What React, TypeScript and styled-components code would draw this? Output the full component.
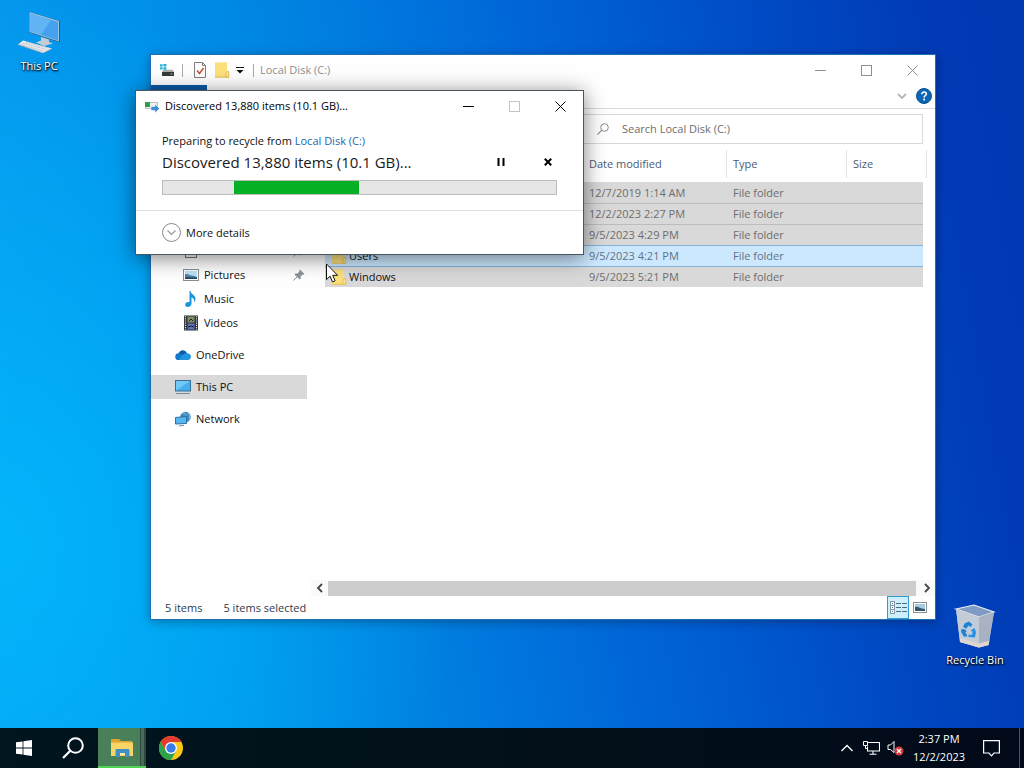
import styled, { createGlobalStyle } from "styled-components";

const GlobalStyle = createGlobalStyle`
    * {
        box-sizing: border-box;
    }
    body {
        margin: 0;
        font-family: "Open Sans", "Noto Sans", sans-serif;
        font-size: 11px;
        line-height: 16px;
        color: #111;
    }
    button, input {
        font: inherit;
        color: inherit;
        border: none;
        padding: 0;
        background: none;
    }
    svg {
        display: block;
        flex: none;
    }
`;

const Screen = styled.div`
    display: flex;
    flex-direction: column;
    min-height: 100vh;
`;

const Desktop = styled.main`
    position: relative;
    flex: 1;
    min-height: 480px;
    overflow: hidden;
    background:
        radial-gradient(ellipse 45% 75% at 0% 75%, rgba(0, 190, 255, 0.75), rgba(0, 190, 255, 0) 100%),
        linear-gradient(80deg, #0a9cf0 0%, #0092ea 22%, #0080e0 38%, #0066d8 56%, #004ec8 74%, #003ab4 92%, #0038b2 100%);
`;

const DesktopIcon = styled.button<{ $place: string }>`
    position: absolute;
    ${({ $place }) => $place}
    width: 76px;
    display: flex;
    flex-direction: column;
    align-items: center;
    gap: 4px;
    color: #fff;
    text-shadow: 1px 1px 2px #000, 0 1px 2px #000;
`;

const Explorer = styled.section`
    position: absolute;
    top: 54px;
    left: 150px;
    right: 88px;
    bottom: 108px;
    display: flex;
    flex-direction: column;
    background: #fff;
    border: 1px solid #1c6fb4;
    box-shadow: 0 2px 10px rgba(0, 0, 0, 0.3);
`;

const TitleBar = styled.header<{ $active?: boolean }>`
    display: flex;
    align-items: center;
    height: 30px;
    padding-left: ${({ $active }) => $active ? 8 : 9}px;
    color: ${({ $active }) => $active ? '#000' : '#8f8f8f'};
    h2 {
        flex: 1;
        margin: 0 0 0 ${({ $active }) => $active ? 5 : 0}px;
        font-size: 11px;
        font-weight: 400;
        white-space: nowrap;
    }
`;

const TitleDivider = styled.span`
    width: 1px;
    height: 13px;
    margin: 0 6px;
    background: #aaa;
`;

const QuickButton = styled.button<{ $narrow?: boolean }>`
    display: flex;
    justify-content: center;
    width: ${({ $narrow }) => $narrow ? 14 : 22}px;
`;

const CaptionButton = styled.button`
    display: flex;
    align-items: center;
    justify-content: center;
    width: 46px;
    height: 29px;
`;

const Ribbon = styled.div`
    display: flex;
    align-items: center;
    justify-content: flex-end;
    gap: 7px;
    height: 24px;
    padding: 0 3px 2px 0;
    border-bottom: 1px solid #dadada;
`;

const FileTab = styled.button`
    align-self: stretch;
    width: 56px;
    margin-right: auto;
    background: #0c5ba6;
`;

const AddressRow = styled.div`
    display: flex;
    gap: 8px;
    padding: 5px 12px 0 60px;
`;

const PathBox = styled.input`
    flex: 1;
    min-width: 0;
    height: 30px;
    padding: 0 8px;
    border: 1px solid #d9d9d9;
`;

const SearchBox = styled.label`
    display: flex;
    align-items: center;
    gap: 13px;
    width: 343px;
    height: 30px;
    padding-left: 16px;
    border: 1px solid #d9d9d9;
    input {
        flex: 1;
        min-width: 0;
        outline: none;
    }
    input::placeholder {
        color: #6d6d6d;
        opacity: 1;
    }
`;

const Panes = styled.div`
    display: flex;
    flex: 1;
    min-height: 0;
`;

const Sidebar = styled.nav`
    width: 156px;
    padding-top: 95px;
    overflow: hidden;
`;

const NavGroup = styled.ul`
    margin: 0 0 8px;
    padding: 0;
    list-style: none;
`;

const NavLink = styled.a<{ $nested?: boolean, $current?: boolean }>`
    display: flex;
    align-items: center;
    gap: 5px;
    height: 24px;
    padding: 0 2px 0 ${({ $nested }) => $nested ? 32 : 24}px;
    color: #111;
    text-decoration: none;
    background: ${({ $current }) => $current ? '#d9d9d9' : 'transparent'};
    span {
        flex: 1;
    }
`;

const Content = styled.div`
    display: flex;
    flex: 1;
    flex-direction: column;
    min-width: 0;
    padding-left: 4px;
`;

const FileArea = styled.div`
    flex: 1;
    min-height: 0;
    overflow: hidden;
    padding: 6px 8px 0 14px;
`;

const FileTable = styled.table`
    width: 100%;
    table-layout: fixed;
    border-collapse: separate;
    border-spacing: 0;
    th {
        height: 28px;
        padding: 0 6px;
        border-right: 1px solid #e3e3e3;
        color: #4c5a70;
        font-weight: 400;
        text-align: left;
    }
    thead::after {
        content: "";
        display: block;
        height: 4px;
    }
`;

const Column = styled.col<{ $width?: number }>`
    width: ${({ $width }) => $width ? $width + 'px' : 'auto'};
`;

const FileRow = styled.tr<{ $focused: boolean, $line: string }>`
    height: 21px;
    color: ${({ $focused }) => $focused ? '#5f7384' : '#6d6d6d'};
    td {
        padding: 0 6px;
        border-top: 1px solid ${({ $line }) => $line};
        background: ${({ $focused }) => $focused ? '#cce8ff' : '#d9d9d9'};
    }
`;

const FileName = styled.span`
    display: flex;
    align-items: center;
    gap: 2px;
    color: #111;
`;

const ScrollBar = styled.div`
    display: flex;
    align-items: center;
    height: 16px;
    background: #fafafa;
    button {
        display: flex;
        align-items: center;
        justify-content: center;
        width: 17px;
        height: 16px;
    }
`;

const ScrollThumb = styled.div`
    flex: 1;
    height: 15px;
    margin-right: 2px;
    background: #cdcdcd;
`;

const StatusBar = styled.footer`
    display: flex;
    align-items: center;
    gap: 21px;
    height: 23px;
    padding-left: 14px;
    color: #2f3b4c;
`;

const ViewButtons = styled.div`
    display: flex;
    margin-left: auto;
    padding-right: 4px;
`;

const ViewButton = styled.button<{ $pressed?: boolean }>`
    display: flex;
    align-items: center;
    justify-content: center;
    width: 22px;
    height: 23px;
    border: 1px solid ${({ $pressed }) => $pressed ? '#2f9bd6' : 'transparent'};
    background: ${({ $pressed }) => $pressed ? '#cdeefb' : 'transparent'};
`;

const Dialog = styled.section`
    position: absolute;
    top: 90px;
    left: 135px;
    width: 449px;
    max-width: calc(100% - 135px);
    background: #fff;
    border: 1px solid #4a5560;
    box-shadow: 0 3px 20px rgba(0, 0, 0, 0.5);
`;

const DialogBody = styled.div`
    padding: 11px 26px 15px;
    border-bottom: 1px solid #dfdfdf;
`;

const Task = styled.p`
    margin: 0;
    line-height: 18px;
    a {
        color: #1a66b0;
        text-decoration: none;
    }
`;

const ProgressHead = styled.div`
    display: flex;
    align-items: center;
    gap: 29px;
    height: 24px;
    button {
        display: flex;
        align-items: center;
        justify-content: center;
        width: 18px;
        height: 18px;
    }
`;

const ProgressText = styled.p`
    flex: 1;
    margin: 0;
    font-size: 15px;
    line-height: 24px;
    color: #1a1a1a;
`;

const ProgressTrack = styled.div`
    height: 15px;
    margin-top: 6px;
    border: 1px solid #bcbcbc;
    background: #e6e6e6;
`;

const ProgressFill = styled.div`
    height: 100%;
    background: #06b025;
`;

const DetailsButton = styled.button`
    display: flex;
    align-items: center;
    gap: 5px;
    height: 43px;
    padding-left: 26px;
`;

const Pointer = styled.div`
    position: absolute;
    top: 263px;
    left: 325px;
    pointer-events: none;
`;

const Taskbar = styled.footer`
    display: flex;
    align-items: center;
    gap: 1px;
    height: 40px;
    padding-right: 3px;
    color: #fff;
    background: linear-gradient(90deg, #01151f, #021019 50%, #020a1a);
`;

const TaskButton = styled.button<{ $progress?: boolean }>`
    display: flex;
    align-items: center;
    justify-content: center;
    width: 48px;
    height: 40px;
    ${({ $progress }) => $progress && `
        padding-top: 2px;
        border-bottom: 2px solid #4fd350;
        background: linear-gradient(90deg, #4a8059 42px, #2b4a3c 42px, #2b4a3c 43px, #4a6b5c 43px, #4a6b5c 46px, #2b4a3c 46px);
    `}
`;

const Tray = styled.div`
    display: flex;
    align-items: center;
    height: 100%;
    margin-left: auto;
`;

const TrayButton = styled.button`
    display: flex;
    align-items: center;
    justify-content: center;
    width: 24px;
    height: 40px;
`;

const Clock = styled.button`
    width: 64px;
    margin-right: 8px;
    line-height: 18px;
    text-align: center;
`;

const ShowDesktop = styled.button`
    width: 2px;
    height: 40px;
    margin-left: 16px;
    border-left: 1px solid #4b5563;
`;

const Minimize = () => (
    <svg width="11" height="11" viewBox="0 0 11 11"><path d="M0 5.5h11" stroke="currentColor" /></svg>
)

const Maximize = ({ color = 'currentColor' }: { color?: string }) => (
    <svg width="11" height="11" viewBox="0 0 11 11"><rect x=".5" y=".5" width="10" height="10" fill="none" stroke={color} /></svg>
)

const Close = () => (
    <svg width="11" height="11" viewBox="0 0 11 11"><path d="M.5.5l10 10M10.5.5l-10 10" stroke="currentColor" /></svg>
)

const Chevron = ({ d, color }: { d: string, color: string }) => (
    <svg width="10" height="10" viewBox="0 0 10 10"><path d={d} fill="none" stroke={color} strokeWidth="1.8" /></svg>
)

const DriveIcon = () => (
    <svg width="16" height="16" viewBox="0 0 16 16">
        <path d="M0 2.3h2.6v2.2H0zM3.4 2h3v2.5h-3zM0 5.3h2.6v2.2H0zM3.4 5.3h3v2.5h-3z" fill="#25b2dc" />
        <path d="M3.5 7.8h9L14 10H2z" fill="#a9adb0" />
        <path d="M2 10h12v4H2z" fill="#33383c" />
        <path d="M10.5 12h2" stroke="#7fe08b" />
    </svg>
)

const CheckDocIcon = () => (
    <svg width="16" height="16" viewBox="0 0 16 16">
        <path d="M2.5.5h8l3 3v12h-11z" fill="#fdfdfd" stroke="#7d7d7d" />
        <path d="M10.5.5v3h3" fill="none" stroke="#7d7d7d" />
        <path d="M5 8.5l2.5 3L11.5 6" fill="none" stroke="#c5502f" strokeWidth="1.5" />
    </svg>
)

const FolderIcon = () => (
    <svg width="16" height="16" viewBox="0 0 16 16">
        <path d="M1 .5h12v11l2 1v3H1z" fill="#f4d667" />
        <path d="M1 1h12v14H1z" fill="#fbe07c" />
        <path d="M13 9.5h1.8v6h-3v-4z" fill="#fbe596" stroke="#dcb442" strokeWidth=".7" />
        <path d="M1 15.2h13" stroke="#e3bd4e" strokeWidth=".8" />
    </svg>
)

const DropIcon = () => (
    <svg width="8" height="8" viewBox="0 0 8 8"><path d="M0 1.5h8" stroke="#111" /><path d="M.5 4h7L4 7.6z" fill="#111" /></svg>
)

const HelpIcon = () => (
    <svg width="16" height="16" viewBox="0 0 16 16">
        <circle cx="8" cy="8" r="7.5" fill="#0b66b5" stroke="#0a4f90" />
        <path d="M5.8 6.2c0-1.4 1-2.2 2.3-2.2s2.2.8 2.2 2c0 1.7-2.2 1.7-2.2 3.4" fill="none" stroke="#fff" strokeWidth="1.6" />
        <rect x="7.2" y="10.6" width="1.8" height="1.8" fill="#fff" />
    </svg>
)

const SearchIcon = () => (
    <svg width="12" height="12" viewBox="0 0 12 12">
        <circle cx="7.5" cy="4.5" r="3.8" fill="none" stroke="#8c8c8c" />
        <path d="M4.8 7.2L.4 11.6" stroke="#8c8c8c" strokeWidth="1.2" />
    </svg>
)

const TransferIcon = () => (
    <svg width="16" height="16" viewBox="0 0 16 16">
        <rect x="1.5" y="4.5" width="12" height="6" fill="#eef1f3" stroke="#b9c0c6" />
        <rect x="1" y="4" width="5" height="5" fill="#2f9e45" />
        <path d="M7 8.5h4V6l4.5 4.5L11 15v-2.6H7z" fill="#3a8ddb" stroke="#fff" strokeWidth=".5" />
    </svg>
)

const DocumentIcon = () => (
    <svg width="16" height="16" viewBox="0 0 16 16">
        <rect x="2.5" y="1.5" width="11" height="13" fill="#fff" stroke="#777" />
        <path d="M5 5h6M5 8h6M5 11h6" stroke="#777" />
    </svg>
)

const PictureIcon = () => (
    <svg width="16" height="16" viewBox="0 0 16 16">
        <rect x=".5" y="2.5" width="15" height="11" fill="#fff" stroke="#8a8f94" />
        <rect x="2" y="4" width="12" height="8" fill="#bfe1f4" />
        <path d="M2 7.5c3-1.5 4 1 6.5 1S12 9.5 14 10v2H2z" fill="#4d81ab" />
        <path d="M2 10.500c4-1 8 .5 12 0V12H2z" fill="#23465f" />
    </svg>
)

const MusicIcon = () => (
    <svg width="16" height="16" viewBox="0 0 16 16">
        <path d="M7.5 0c.5 3.5 5 3.800 5 7.800 0 1.500-.6 2.500-1.500 3.400.6-2.800-.8-4.400-2.500-5v6.300c0 2-1.600 3.500-3.600 3.500-1.700 0-2.700-1-2.700-2.300 0-1.800 2-3 4.300-2.500V0z" fill="#1a94dc" />
    </svg>
)

const VideoIcon = () => (
    <svg width="16" height="16" viewBox="0 0 16 16">
        <rect x="1" y=".5" width="14" height="15" fill="#2d3036" />
        <path d="M2.5 1v14M13.5 1v14" stroke="#dcdcdc" strokeWidth="1.2" strokeDasharray="1.2 1" />
        <rect x="4.5" y="1.5" width="7" height="6" fill="#7d8d68" />
        <rect x="4.5" y="8.5" width="7" height="6" fill="#5b72b8" />
        <path d="M6 6l2-2 2 2M5 12l3-1 3 1" stroke="#1c2028" fill="none" />
    </svg>
)

const CloudIcon = () => (
    <svg width="16" height="16" viewBox="0 0 16 16">
        <path d="M3.5 6.500C4.500 3.300 9.500 1.500 12 6.300l-4 4.200-6 1z" fill="#0c5cae" />
        <path d="M3.600 13a3.300 3.300 0 0 1 0-6.700c1.700 0 2.600.7 4 1.700l5 4z" fill="#1279cc" />
        <path d="M3.500 13c2-2 4-6.800 8.500-6.800 2.500 0 4 1.700 4 3.500 0 1.900-1.400 3.300-3.300 3.300z" fill="#2394e0" />
    </svg>
)

const ComputerIcon = () => (
    <svg width="16" height="16" viewBox="0 0 16 16">
        <rect x=".5" y="1.500" width="15" height="10.500" fill="#45b0ee" stroke="#3a6d92" />
        <path d="M1 11.500V2h14z" fill="#72c8f6" />
        <path d="M1 14.500h14" stroke="#7d8a93" />
    </svg>
)

const NetworkIcon = () => (
    <svg width="16" height="16" viewBox="0 0 16 16">
        <circle cx="10.500" cy="6" r="5.300" fill="#3f88bd" />
        <path d="M7 2.500c2-1 4 0 4 2M12.500 1.500c2 2 3 5 1.500 8" fill="none" stroke="#8fc9e8" />
        <path d="M.5 6.500l11-1v7l-11 .5z" fill="#55b8f0" stroke="#2b6f9e" />
        <path d="M4 14.800l5-.3" stroke="#7d8a93" />
    </svg>
)

const PinIcon = () => (
    <svg width="12" height="12" viewBox="0 0 12 12">
        <path d="M7 .5L11.5 5l-1 .8-.9-.2-2 2 .1 2.200-1 .8-5.200-5.200.8-1 2.200.1 2-2-.3-1z" fill="#8b949b" />
        <path d="M4 8L.5 11.5" stroke="#8b949b" />
    </svg>
)

const DetailsViewIcon = () => (
    <svg width="17" height="13" viewBox="0 0 17 13">
        {[0, 4, 8].map((y) =>
            <g key={y}>
                <rect x=".5" y={y + .5} width="4" height="4" fill="#fff" stroke="#8297a3" />
                <path d={`M2 ${y + 2.5}h1M6 ${y + 2.5}h5M12 ${y + 2.5}h5`} stroke="#4d6c80" />
            </g>
        )}
    </svg>
)

const ThumbnailViewIcon = () => (
    <svg width="14" height="12" viewBox="0 0 14 12">
        <rect x=".5" y=".5" width="13" height="10" fill="#fff" stroke="#8a8f94" />
        <rect x="2" y="2" width="10" height="7" fill="#a9cbe2" />
        <path d="M2 5c3-1 4 1.500 10 2v2H2z" fill="#33556e" />
    </svg>
)

const LargePcIcon = () => (
    <svg width="44" height="42" viewBox="0 0 44 42">
        <path d="M12.500 0L43 9v21.500L12.500 20.500z" fill="#2c5a80" />
        <path d="M12.500 0L42 9v20.500L12.500 20z" fill="#9cc4de" />
        <path d="M13.500 1.500L41 10v18.500L13.500 19.300z" fill="#46a2ee" />
        <path d="M13.500 1.500L34 8 24 22.800 13.500 19.300z" fill="#63b4f5" />
        <path d="M24 25l8 2.500v2.500l4 1.500-9 2.500-8-3.500 5-2z" fill="#c3ccd3" />
        <path d="M6 28.500l29 8-9 4.500L1 32.500z" fill="#e9edf0" />
        <path d="M5.500 31l24 6.500M9 30l23 6M3.500 32.500l23 6.500" stroke="#a5afb8" strokeWidth=".7" strokeDasharray="2 .7" />
        <path d="M1 32.500L26 41l9-4.500" fill="none" stroke="#9aa8b3" strokeWidth=".8" />
    </svg>
)

const RecycleBinIcon = () => (
    <svg width="42" height="44" viewBox="0 0 42 44">
        <path d="M2 5l18-4 20 7-5.500 33L25 43.500 6 38z" fill="#bfc8d4" />
        <path d="M2 5l18-4 20 7-15 5z" fill="#7f9bc4" stroke="#e8edf3" strokeWidth="1.200" />
        <path d="M2 5l23 8v30.500L6 38z" fill="#c3cbd6" />
        <path d="M25 13l15-5-5.500 33-9.500 2.500z" fill="#a8b2c2" />
        <path d="M6 34l19 5.500 10.500-3-1 4.500-9.500 2.500L6 38z" fill="#ddd6d0" />
        <path d="M10.500 19.500l4.500-2 3.500 3-2 2.500-2-1.500-2 3-3.500-1.500z" fill="#1c83d6" />
        <path d="M7.500 25l4 .5 1 2-1 .8 2 4-3.500.5-3-5z" fill="#1c83d6" />
        <path d="M14.500 30.500l3.500.5.500-3.500-2-1 4-2.500 1.500 4-1 5.500-6.500-.5z" fill="#2792e2" />
    </svg>
)

const PointerIcon = () => (
    <svg width="14" height="21" viewBox="0 0 14 21">
        <path d="M1.500 1v15.600l3.600-3.400 2.400 5.700 2.600-1.100-2.400-5.500h4.900z" fill="#fff" stroke="#111" />
    </svg>
)

const StartIcon = () => (
    <svg width="16" height="16" viewBox="0 0 16 16">
        <path d="M0 2.300L6.600 1.400v6.200H0zM7.400 1.300L16 0v7.600H7.400zM0 8.400h6.600v6.200L0 13.700zM7.400 8.400H16V16l-8.600-1.300z" fill="#fff" />
    </svg>
)

const TaskSearchIcon = () => (
    <svg width="22" height="22" viewBox="0 0 22 22">
        <circle cx="13.500" cy="8.500" r="7.300" fill="none" stroke="#fff" strokeWidth="2" />
        <path d="M8.300 13.700L1 21" stroke="#fff" strokeWidth="2.200" />
    </svg>
)

const TaskFolderIcon = () => (
    <svg width="22" height="18" viewBox="0 0 22 18">
        <path d="M0 0h8l2 2h11v4H0z" fill="#e0a52c" />
        <path d="M0 3.500h22V17H0z" fill="#fbd467" />
        <path d="M4.500 18v-6.500c0-.8.5-1.500 1.500-1.500h11c1 0 1.500.7 1.500 1.500V18H14v-4H9v4z" fill="#3e8fc6" />
        <path d="M9 14h5v2H9z" fill="#fbe7a6" />
    </svg>
)

const ChromeIcon = () => (
    <svg width="24" height="24" viewBox="0 0 24 24">
        <circle cx="12" cy="12" r="12" fill="#fbc916" />
        <path d="M1.600 6a12 12 0 0 1 20.800 0H12L6.800 15z" fill="#e33b2e" />
        <path d="M1.600 6a12 12 0 0 0 10.400 18l5.200-9-10.400 0z" fill="#2ba24c" />
        <circle cx="12" cy="12" r="6" fill="#fff" />
        <circle cx="12" cy="12" r="4.700" fill="#3a7de8" />
    </svg>
)

const WiredIcon = () => (
    <svg width="17" height="14" viewBox="0 0 17 14">
        <path d="M5 1.500h11.500v8.500H4.500V5.500M10 10v3M6.500 13.300h7" fill="none" stroke="#fff" strokeWidth="1.100" />
        <path d="M.5.500h4v4h-4zM2.500 4.500v3h2" fill="none" stroke="#fff" />
    </svg>
)

const MutedIcon = () => (
    <svg width="17" height="16" viewBox="0 0 17 16">
        <path d="M1 5h2.500L7 1.500v11L3.500 9.500H1z" fill="none" stroke="#fff" />
        <circle cx="12" cy="11" r="4.500" fill="#d33a3a" />
        <path d="M10 9l4 4M14 9l-4 4" stroke="#fff" strokeWidth="1.200" />
    </svg>
)

const MessageIcon = () => (
    <svg width="17" height="17" viewBox="0 0 17 17">
        <path d="M.6.600h15.800v12.400h-5.400L8.500 15.800 6 13H.6z" fill="none" stroke="#fff" strokeWidth="1.200" />
    </svg>
)

const quickAccess = [
    { name: 'Documents', icon: <DocumentIcon />, pinned: true },
    { name: 'Pictures', icon: <PictureIcon />, pinned: true },
    { name: 'Music', icon: <MusicIcon />, pinned: false },
    { name: 'Videos', icon: <VideoIcon />, pinned: false },
];

const places = [
    { name: 'OneDrive', icon: <CloudIcon />, current: false },
    { name: 'This PC', icon: <ComputerIcon />, current: true },
    { name: 'Network', icon: <NetworkIcon />, current: false },
];

const files = [
    { id: 1, name: '', date: '12/7/2019 1:14 AM', focused: false, line: '#d9d9d9' },
    { id: 2, name: '', date: '12/2/2023 2:27 PM', focused: false, line: '#bcbcbc' },
    { id: 3, name: '', date: '9/5/2023 4:29 PM', focused: false, line: '#bcbcbc' },
    { id: 4, name: 'Users', date: '9/5/2023 4:21 PM', focused: true, line: '#86b4d8' },
    { id: 5, name: 'Windows', date: '9/5/2023 5:21 PM', focused: false, line: '#86b4d8' },
];

const progress = { start: 18, length: 32 };

const ExplorerWindow = () => (
    <Explorer>
        <TitleBar>
            <DriveIcon />
            <TitleDivider />
            <QuickButton aria-label="Properties"><CheckDocIcon /></QuickButton>
            <QuickButton aria-label="New folder"><FolderIcon /></QuickButton>
            <QuickButton $narrow aria-label="Customize toolbar"><DropIcon /></QuickButton>
            <TitleDivider />
            <h2>Local Disk (C:)</h2>
            <CaptionButton aria-label="Minimize"><Minimize /></CaptionButton>
            <CaptionButton aria-label="Maximize"><Maximize /></CaptionButton>
            <CaptionButton aria-label="Close"><Close /></CaptionButton>
        </TitleBar>
        <Ribbon>
            <FileTab aria-label="File" />
            <QuickButton $narrow aria-label="Expand the ribbon"><Chevron d="M1 3l4 4 4-4" color="#b5b5b5" /></QuickButton>
            <button aria-label="Help"><HelpIcon /></button>
        </Ribbon>
        <AddressRow>
            <PathBox type="text" aria-label="Address" />
            <SearchBox>
                <SearchIcon />
                <input type="text" aria-label="Search Local Disk (C:)" placeholder="Search Local Disk (C:)" />
            </SearchBox>
        </AddressRow>
        <Panes>
            <Sidebar>
                <NavGroup>
                    {quickAccess.map(({ name, icon, pinned }) =>
                        <li key={name}>
                            <NavLink $nested href={'#' + name}>{icon}<span>{name}</span>{pinned && <PinIcon />}</NavLink>
                        </li>
                    )}
                </NavGroup>
                {places.map(({ name, icon, current }) =>
                    <NavGroup key={name}>
                        <li><NavLink $current={current} href={'#' + name}>{icon}<span>{name}</span></NavLink></li>
                    </NavGroup>
                )}
            </Sidebar>
            <Content>
                <FileArea>
                    <FileTable>
                        <colgroup>
                            <Column />
                            <Column $width={144} />
                            <Column $width={120} />
                            <Column $width={76} />
                            <Column $width={4} />
                        </colgroup>
                        <thead>
                            <tr>
                                <th aria-label="Name"></th>
                                <th>Date modified</th>
                                <th>Type</th>
                                <th colSpan={2}>Size</th>
                            </tr>
                        </thead>
                        <tbody>
                            {files.map(({ id, name, date, focused, line }) =>
                                <FileRow key={id} $focused={focused} $line={line}>
                                    <td><FileName><FolderIcon />{name}</FileName></td>
                                    <td>{date}</td>
                                    <td>File folder</td>
                                    <td></td>
                                </FileRow>
                            )}
                        </tbody>
                    </FileTable>
                </FileArea>
                <ScrollBar>
                    <button aria-label="Scroll left"><Chevron d="M7 1L3 5l4 4" color="#444" /></button>
                    <ScrollThumb />
                    <button aria-label="Scroll right"><Chevron d="M3 1l4 4-4 4" color="#444" /></button>
                </ScrollBar>
            </Content>
        </Panes>
        <StatusBar>
            <span>5 items</span>
            <span>5 items selected</span>
            <ViewButtons>
                <ViewButton $pressed aria-label="Details view"><DetailsViewIcon /></ViewButton>
                <ViewButton aria-label="Thumbnail view"><ThumbnailViewIcon /></ViewButton>
            </ViewButtons>
        </StatusBar>
    </Explorer>
)

const ProgressDialog = () => (
    <Dialog role="dialog" aria-label="Recycle progress">
        <TitleBar $active>
            <TransferIcon />
            <h2>Discovered 13,880 items (10.1 GB)...</h2>
            <CaptionButton aria-label="Minimize"><Minimize /></CaptionButton>
            <CaptionButton aria-label="Maximize" disabled><Maximize color="#c4c4c4" /></CaptionButton>
            <CaptionButton aria-label="Close"><Close /></CaptionButton>
        </TitleBar>
        <DialogBody>
            <Task>Preparing to recycle from <a href="#disk">Local Disk (C:)</a></Task>
            <ProgressHead>
                <ProgressText>Discovered 13,880 items (10.1 GB)...</ProgressText>
                <button aria-label="Pause">
                    <svg width="8" height="8" viewBox="0 0 8 8"><path d="M1.500 0v8M6.500 0v8" stroke="#000" strokeWidth="2" /></svg>
                </button>
                <button aria-label="Cancel">
                    <svg width="8" height="8" viewBox="0 0 8 8"><path d="M.8.800l6.400 6.400M7.200.800L.8 7.200" stroke="#000" strokeWidth="2" /></svg>
                </button>
            </ProgressHead>
            <ProgressTrack role="progressbar" aria-label="Discovering items">
                <ProgressFill style={{ marginLeft: progress.start + '%', width: progress.length + '%' }} />
            </ProgressTrack>
        </DialogBody>
        <DetailsButton>
            <svg width="19" height="19" viewBox="0 0 19 19">
                <circle cx="9.500" cy="9.500" r="9" fill="#fff" stroke="#8a8a8a" />
                <path d="M5.500 7.500l4 4 4-4" fill="none" stroke="#999" strokeWidth="1.200" />
            </svg>
            More details
        </DetailsButton>
    </Dialog>
)

export default function App() {
    return (
        <Screen>
            <GlobalStyle />
            <Desktop>
                <DesktopIcon $place="top: 12px; left: 1px;"><LargePcIcon />This PC</DesktopIcon>
                <DesktopIcon $place="right: 11px; bottom: 60px;"><RecycleBinIcon />Recycle Bin</DesktopIcon>
                <ExplorerWindow />
                <ProgressDialog />
                <Pointer><PointerIcon /></Pointer>
            </Desktop>
            <Taskbar>
                <TaskButton aria-label="Start"><StartIcon /></TaskButton>
                <TaskButton aria-label="Search"><TaskSearchIcon /></TaskButton>
                <TaskButton $progress aria-label="File Explorer"><TaskFolderIcon /></TaskButton>
                <TaskButton aria-label="Chrome"><ChromeIcon /></TaskButton>
                <Tray>
                    <TrayButton aria-label="Show hidden icons">
                        <svg width="12" height="8" viewBox="0 0 12 8"><path d="M.5 7L6 1.500 11.500 7" fill="none" stroke="#fff" strokeWidth="1.300" /></svg>
                    </TrayButton>
                    <TrayButton aria-label="Network"><WiredIcon /></TrayButton>
                    <TrayButton aria-label="Volume"><MutedIcon /></TrayButton>
                    <Clock>2:37 PM<br />12/2/2023</Clock>
                    <TrayButton aria-label="Notifications"><MessageIcon /></TrayButton>
                    <ShowDesktop aria-label="Show desktop" />
                </Tray>
            </Taskbar>
        </Screen>
    )
}
